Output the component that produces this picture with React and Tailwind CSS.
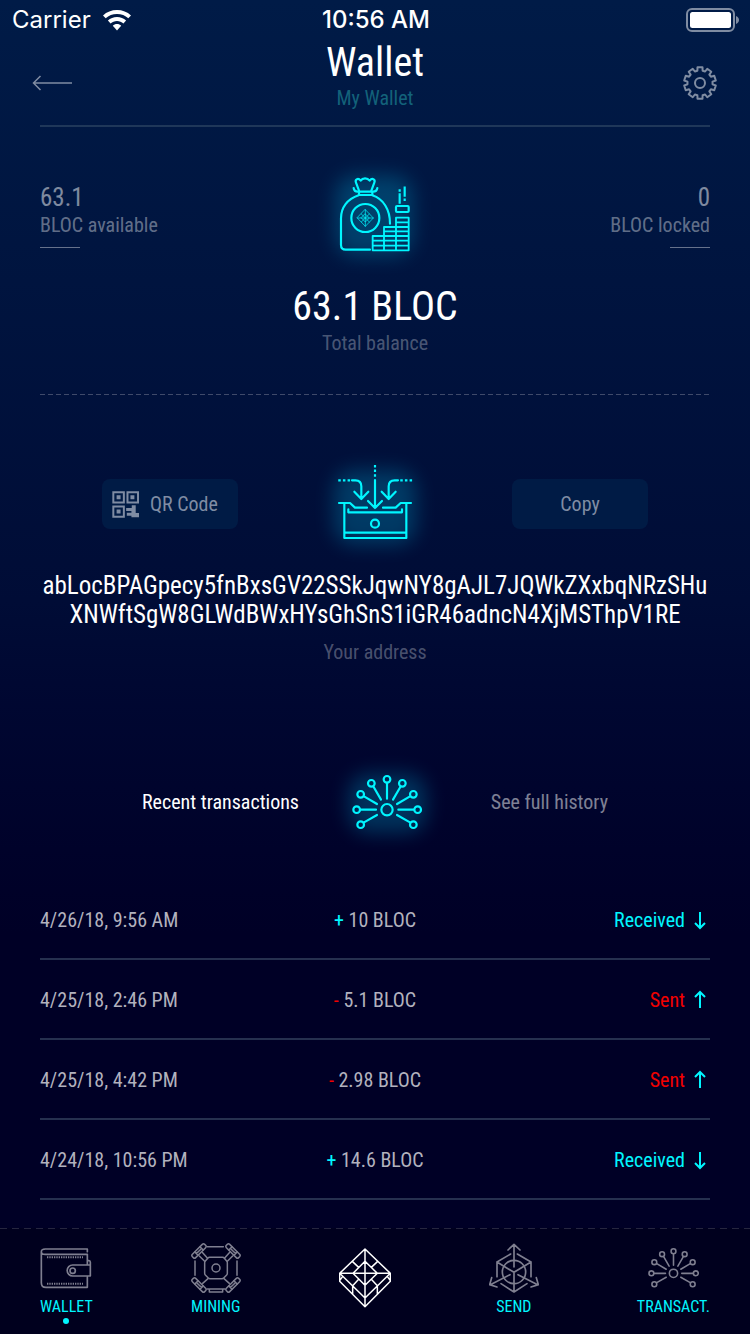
const transactions = [
  { date: '4/26/18, 9:56 AM', amount: '10 BLOC', received: true },
  { date: '4/25/18, 2:46 PM', amount: '5.1 BLOC', received: false },
  { date: '4/25/18, 4:42 PM', amount: '2.98 BLOC', received: false },
  { date: '4/24/18, 10:56 PM', amount: '14.6 BLOC', received: true },
];

const stroke = {
  fill: 'none',
  stroke: 'currentColor',
  strokeLinecap: 'round',
  strokeLinejoin: 'round',
};

function Glow({ id, x, y, width, height }) {
  return (
    <>
      <defs>
        <filter id={id} x="-100%" y="-100%" width="300%" height="300%">
          <feGaussianBlur stdDeviation="28" />
        </filter>
      </defs>
      <rect x={x - 14} y={y - 14} width={width + 28} height={height + 28} rx="60" fill="#00c4f0" stroke="none" opacity="0.240" filter={`url(#${id})`} />
    </>
  );
}

function WifiIcon() {
  return (
    <svg viewBox="0 0 28 21" className="h-[21px] w-7" fill="currentColor" aria-hidden="true">
      <path d="M14 0C8.600 0 3.700 2 0 5.400l2.700 2.900C5.700 5.500 9.600 4 14 4s8.300 1.500 11.300 4.300L28 5.400C24.300 2 19.400 0 14 0Z" />
      <path d="M14 7c-3.500 0-6.700 1.300-9.100 3.600l2.700 2.900C9.300 11.900 11.500 11 14 11s4.700.9 6.400 2.500l2.700-2.900C20.700 8.300 17.500 7 14 7Z" />
      <path d="M14 14c-1.600 0-3.100.6-4.200 1.700L14 20.500l4.200-4.800C17.100 14.600 15.600 14 14 14Z" />
    </svg>
  );
}

function BatteryIcon() {
  return (
    <svg viewBox="0 0 54 24" className="h-6 w-[54px]" aria-hidden="true">
      <rect x="1" y="1" width="47" height="22" rx="5" fill="none" stroke="#7f8ca2" strokeWidth="2" />
      <rect x="4" y="4" width="41" height="16" rx="2.500" fill="#fff" />
      <path d="M50 8c2 .8 3 2.300 3 4s-1 3.200-3 4Z" fill="#7f8ca2" />
    </svg>
  );
}

function GearIcon() {
  const teeth = 10;
  const points = [];
  for (let i = 0; i < teeth; i++) {
    [[-12, 12.6], [-9, 16], [9, 16], [12, 12.6]].forEach(([offset, r]) => {
      const a = (((i * 360) / teeth + offset) * Math.PI) / 180;
      points.push(`${(18 + r * Math.sin(a)).toFixed(2)},${(18 - r * Math.cos(a)).toFixed(2)}`);
    });
  }
  return (
    <svg viewBox="0 0 36 36" className="size-9" {...stroke} strokeWidth="2" aria-hidden="true">
      <polygon points={points.join(' ')} />
      <circle cx="18" cy="18" r="5" />
    </svg>
  );
}

function MoneyBagIcon() {
  return (
    <svg viewBox="0 0 390 360" className="h-[120px] w-[130px] overflow-visible text-[#00f6ff]" {...stroke} strokeWidth="6.500" aria-hidden="true">
      <Glow id="glow-bag" x={90} y={90} width={205} height={215} />
      <path d="M147 122 138 98c-4-11 7-15 14-6 6-9 20-9 27 0 7-9 18-5 14 6l-9 24" />
      <path d="M131 114c1 8 5 11 12 11h46c7 0 12-3 13-11M147 127v8h40v-8" />
      <path d="M146 136c-34 11-53 37-53 69v80q0 14 14 14h73M187 136c33 11 53 42 53 85" />
      <circle cx="166" cy="204" r="42" />
      <path d="M166 179 190 204 166 229 142 204ZM142 204h48M166 179v50M154 192l24 24M178 192l-24 24M166 192l12 12-12 12-12-12Z" strokeWidth="2.500" opacity="0.850" />
      <path d="M188 301V258h34v-27h36v-28h38v98ZM188 272h108M188 287h108M222 258h74M222 244h74M258 231h38M258 217h38M222 258v43M258 231v70" strokeWidth="5.500" />
      <rect x="258" y="168" width="38" height="18" rx="3" />
      <path d="M269 133v25M269 121v1M284 113v24M284 149v1" strokeLinecap="square" />
    </svg>
  );
}

function DepositIcon() {
  return (
    <svg viewBox="0 -3 390 330" className="h-[110px] w-[130px] overflow-visible text-[#00f6ff]" {...stroke} strokeWidth="6.500" aria-hidden="true">
      <Glow id="glow-deposit" x={85} y={75} width={220} height={195} />
      <path d="M195 90v84M174 153l21 21 21-21M126 91h10q18 0 18 18v37M133 125l21 22 21-22M264 91h-10q-18 0-18 18v37M215 125l21 22 21-22" />
      <path d="M195 48v1M195 62v1M195 76v1M88 91h1M102 91h1M116 91h1M274 91h1M288 91h1M302 91h1" strokeLinecap="square" />
      <path d="M87 159h33l15 14h36M219 173h38l15-14h31M115 178v9h161v-9M103 162v102h186V162M103 248h186" />
      <circle cx="195" cy="221" r="12" />
    </svg>
  );
}

function NetworkShape() {
  return (
    <>
      <circle cx="201" cy="179" r="17" />
      <circle cx="201" cy="88" r="10" />
      <circle cx="154" cy="100" r="10" />
      <circle cx="247" cy="100" r="10" />
      <circle cx="122" cy="133" r="10" />
      <circle cx="280" cy="133" r="10" />
      <circle cx="110" cy="179" r="10" />
      <circle cx="293" cy="179" r="10" />
      <circle cx="122" cy="224" r="10" />
      <circle cx="280" cy="224" r="10" />
      <path d="M201 100v46M161 111l22 38M132 139l39 23M122 179h46M132 217l39-22M241 111l-22 38M270 139l-39 23M281 179h-46M270 217l-39-22" />
    </>
  );
}

function HistoryIcon() {
  return (
    <svg viewBox="30 6 390 300" className="h-[100px] w-[130px] overflow-visible text-[#00f6ff]" {...stroke} strokeWidth="6.500" aria-hidden="true">
      <Glow id="glow-history" x={100} y={85} width={205} height={150} />
      <NetworkShape />
    </svg>
  );
}

function QrIcon() {
  return (
    <svg viewBox="65 74 82 82" className="size-[27px]" fill="currentColor" aria-hidden="true">
      <path fillRule="evenodd" d="M66 75h38v37H66ZM72 81v25h26V81ZM109 75h38v37h-38ZM115 81v25h26V81ZM66 118h38v37H66ZM72 124v25h26v-25Z" />
      <path d="M79 87h12v12H79ZM121 87h12v12h-12ZM79 130h12v12H79ZM125 117h12v24h10v13h-23v-5h-14v-9h14v-5h-16v-9h17Z" />
    </svg>
  );
}

function ArrowIcon({ down }) {
  return (
    <svg viewBox="0 0 20 20" className="size-5 text-[#00f6ff]" fill="none" stroke="currentColor" strokeWidth="2" aria-hidden="true">
      <path d={down ? 'M10 2v16M5 13l5 5 5-5' : 'M10 18V2M5 7l5-5 5 5'} />
    </svg>
  );
}

function WalletIcon() {
  return (
    <svg viewBox="124 69 156 150" className="h-[50px] w-[52px]" {...stroke} strokeWidth="5" aria-hidden="true">
      <path d="M266 95v-8H140q-12 0-12 8t12 8h126v31M128 95v93q0 14 14 14h124v-30M275 136v32h-53a16.500 16.500 0 0 1 0-33h53M266 122h5q4 0 4 5v10" />
      <circle cx="222" cy="152" r="8" />
      <path d="M145 112h108M145 191h108" strokeDasharray="4 3" strokeLinecap="butt" strokeWidth="6" />
    </svg>
  );
}

function MiningPad({ transform }) {
  return (
    <g transform={transform}>
      <rect x="-26" y="-7" width="52" height="14" rx="5" />
      <path d="M-11-7V7M11-7V7M-11 0H11" />
    </g>
  );
}

function MiningIcon() {
  return (
    <svg viewBox="573 68 150 150" className="size-[50px]" {...stroke} strokeWidth="4.500" aria-hidden="true">
      <MiningPad transform="translate(597 92) rotate(-45)" />
      <MiningPad transform="translate(699 92) rotate(45)" />
      <MiningPad transform="translate(597 194) rotate(45)" />
      <MiningPad transform="translate(699 194) rotate(-45)" />
      <path d="M622 79h48M585 122v43M711 122v43M622 206h52M628 206v9h40v-9M608 97l14 16M688 97l-14 16M608 189l16-14M688 189l-16-14M598 107l16 16M698 107l-16 16" />
      <path d="M628 111h40q3 0 5 3l7 8q2 2 2 5v32q0 3-2 5l-9 9q-2 2-5 2h-36q-3 0-5-2l-9-9q-2-2-2-5v-32q0-3 2-5l8-9q2-2 4-2Z" />
      <circle cx="648" cy="143" r="12" />
    </svg>
  );
}

function BlocIcon() {
  return (
    <svg viewBox="236 84 156 180" className="h-[60px] w-[52px]" {...stroke} strokeWidth="4.500" aria-hidden="true">
      <path d="M314 87 390 160v24l-76 76-76-76v-24ZM238 160h152M314 87v173M314 124l37 36-37 36-36-36ZM238 160l76 74 76-74M276 124l19 18M352 124l-19 18M295 178l-18 19v24M333 178l18 19v24M238 182l7-10M390 182l-7-10" />
    </svg>
  );
}

function SendIcon() {
  return (
    <svg viewBox="684 71 150 150" className="size-[50px]" {...stroke} strokeWidth="5" aria-hidden="true">
      <circle cx="759" cy="158" r="35" />
      <path d="M759 143V76M741 92l18-17 18 17M747 166l-59 30M692 175l-6 21 22 7M771 166l59 30M826 175l6 21-22 7M708 128l51 31 51-31M759 159v58M749 104l-41 24v44M769 104l41 24v44M720 193l39 25 39-25" />
    </svg>
  );
}

function TransactIcon() {
  return (
    <svg viewBox="96 54 210 206" className="h-[50px] w-[51px]" {...stroke} strokeWidth="6.500" aria-hidden="true">
      <NetworkShape />
    </svg>
  );
}

function NavItem({ label, icon, active }) {
  return (
    <a href="#" aria-current={active ? 'page' : undefined} className="flex flex-col items-center text-[#7f7f90]">
      {icon}
      <span className="mt-1 text-[16px] leading-5 text-[#00f6ff]">{label}</span>
      {active && <span className="mt-px size-1.5 rounded-full bg-[#00f6ff]" />}
    </a>
  );
}

export default function App() {
  return (
    <div className="flex min-h-screen flex-col bg-linear-to-b from-[#001b47] via-[#000c36] via-45% to-[#000026] to-70% font-['Roboto_Condensed',Roboto,sans-serif] text-white">
      <div className="grid h-10 grid-cols-3 items-center pr-2.5 pl-3 font-[Inter,sans-serif] text-[24px]">
        <span className="flex items-center gap-3">
          Carrier <WifiIcon />
        </span>
        <span className="text-center font-medium">10:56 AM</span>
        <span className="flex justify-end">
          <BatteryIcon />
        </span>
      </div>

      <header>
        <div className="grid grid-cols-[1fr_auto_1fr] items-center px-8">
          <button type="button" aria-label="Back" className="justify-self-start text-[#7f8ca2]">
            <svg viewBox="0 0 40 16" className="h-4 w-10" fill="none" stroke="currentColor" strokeWidth="1.500" aria-hidden="true">
              <path d="M40 8H1.500M8.500 1l-7 7 7 7" />
            </svg>
          </button>
          <div className="pb-[15px] text-center">
            <h1 className="text-[40px] leading-[46px]">Wallet</h1>
            <p className="text-[20px] leading-6 text-[#13627a]">My Wallet</p>
          </div>
          <button type="button" aria-label="Settings" className="justify-self-end text-[#7f8ca2]">
            <GearIcon />
          </button>
        </div>
        <hr className="mx-10 border-t-2 border-[#1f3759]" />
      </header>

      <main>
        <section className="mx-10 pt-[23px] text-center">
          <div className="grid grid-cols-[1fr_auto_1fr]">
            <div className="pt-[33px] text-left">
              <p className="text-[25px] leading-[30px] text-white/50">63.1</p>
              <p className="text-[20px] leading-6 text-white/40">BLOC available</p>
              <div className="mt-2.5 h-px w-10 bg-white/40" />
            </div>
            <MoneyBagIcon />
            <div className="pt-[33px] text-right">
              <p className="text-[25px] leading-[30px] text-white/50">0</p>
              <p className="text-[20px] leading-6 text-white/40">BLOC locked</p>
              <div className="mt-2.5 ml-auto h-px w-10 bg-white/40" />
            </div>
          </div>
          <p className="mt-[13px] text-[40px] leading-[48px]">63.1 BLOC</p>
          <p className="text-[20px] leading-6 text-white/30">Total balance</p>
          <div className="mt-[39px] h-px bg-[repeating-linear-gradient(90deg,#3f4a6a_0_5px,transparent_5px_8px)]" />
        </section>

        <section className="pt-[54px] text-center">
          <div className="flex items-center justify-between px-[102px] text-[20px] text-[#7f8ca3]">
            <button type="button" className="flex h-[50px] w-[136px] items-center gap-[11px] rounded-lg bg-[#001b45] pl-2.5">
              <QrIcon /> QR Code
            </button>
            <DepositIcon />
            <button type="button" className="h-[50px] w-[136px] rounded-lg bg-[#001b45]">
              Copy
            </button>
          </div>
          <p className="mx-10 mt-3 text-[25px] leading-[29px]">
            abLocBPAGpecy5fnBxsGV22SSkJqwNY8gAJL7JQWkZXxbqNRzSHu
            <wbr />
            XNWftSgW8GLWdBWxHYsGhSnS1iGR46adncN4XjMSThpV1RE
          </p>
          <p className="mt-[11px] text-[20px] leading-6 text-white/30">Your address</p>
        </section>

        <section className="pt-[88px]">
          <div className="flex items-center justify-between px-[142px] text-[20px]">
            <h2>Recent transactions</h2>
            <HistoryIcon />
            <a href="#" className="text-white/50">
              See full history
            </a>
          </div>
          <div className="mx-10 mt-7">
            <table className="w-full table-fixed border-separate border-spacing-0 text-[20px] text-[#b2b2be]">
              <tbody>
                {transactions.map((t) => (
                  <tr key={t.date}>
                    <td className="h-20 border-b-2 border-[#26304f] pt-0.5">{t.date}</td>
                    <td className="border-b-2 border-[#26304f] pt-0.5 text-center">
                      <span className={t.received ? 'text-[#00f6ff]' : 'text-[#f20000]'}>{t.received ? '+' : '-'}</span> {t.amount}
                    </td>
                    <td className="border-b-2 border-[#26304f] pt-0.5">
                      <span className={t.received ? 'flex items-center justify-end gap-[5px] text-[#00f6ff]' : 'flex items-center justify-end gap-[5px] text-[#f20000]'}>
                        {t.received ? 'Received' : 'Sent'}
                        <ArrowIcon down={t.received} />
                      </span>
                    </td>
                  </tr>
                ))}
              </tbody>
            </table>
          </div>
        </section>
      </main>

      <nav className="mt-auto bg-[#00001e]">
        <div className="h-px bg-[repeating-linear-gradient(90deg,#26263f_0_7px,transparent_7px_12px)]" />
        <div className="flex items-start justify-between px-10 pt-3.5 pb-2.5">
          <NavItem label="WALLET" icon={<WalletIcon />} active />
          <NavItem label="MINING" icon={<MiningIcon />} />
          <a href="#" aria-label="BLOC" className="pt-[5px]">
            <BlocIcon />
          </a>
          <NavItem label="SEND" icon={<SendIcon />} />
          <NavItem label="TRANSACT." icon={<TransactIcon />} />
        </div>
      </nav>
    </div>
  );
}
